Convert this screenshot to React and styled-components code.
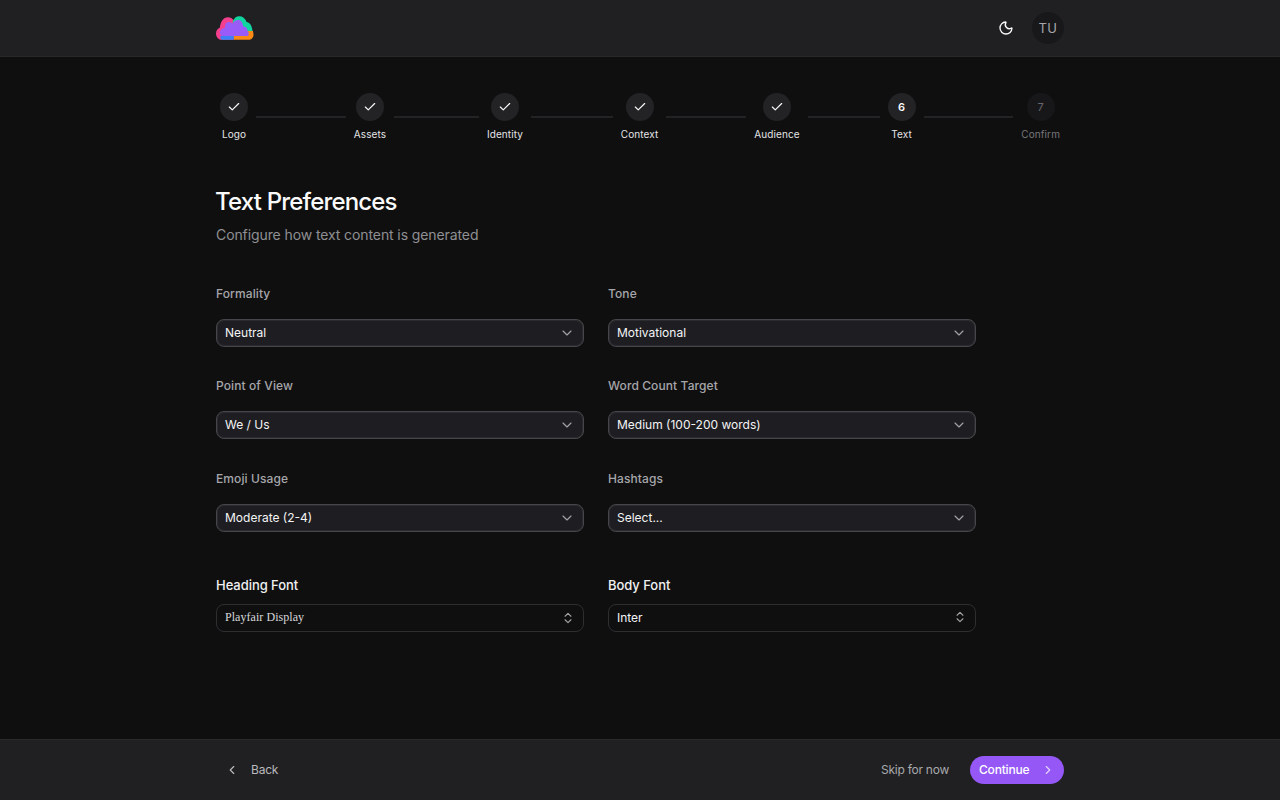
import React from "react";
import styled, { createGlobalStyle } from "styled-components";
import { Check, ChevronDown, ChevronLeft, ChevronRight, ChevronsUpDown, Moon } from "lucide-react";

const Global = createGlobalStyle`
  html, body { margin: 0; padding: 0; background: #0f0f10; }
  * { box-sizing: border-box; }
  body { font-family: Inter, "Liberation Sans", sans-serif; color: #fafafa; }
`;
const Page = styled.div`
  width: 1280px; height: 800px; display: flex; flex-direction: column; background: #0f0f10; overflow: hidden;
`;
const Bar = styled.div`
  height: 57px; flex: none; background: #202023; border-bottom: 1px solid #29292c; display: flex; justify-content: center;
`;
const BarInner = styled.div`
  width: 848px; display: flex; align-items: center; justify-content: space-between;
`;
const Logo = styled.svg`
  width: 37.5px; height: 24px; display: block;
`;
const HeaderRight = styled.div`
  display: flex; align-items: center; gap: 10px;
`;
const ThemeButton = styled.div`
  width: 32px; height: 32px; display: flex; align-items: center; justify-content: center; color: #fafafa;
`;
const Avatar = styled.div`
  width: 32px; height: 32px; border-radius: 50%; background: #18181a; color: #a6a6a9;
  display: flex; align-items: center; justify-content: center; font-size: 13px; letter-spacing: 0.4px;
`;
const Main = styled.main`
  flex: 1; width: 848px; margin: 0 auto; padding-top: 36px;
`;
const Stepper = styled.div`
  display: flex; align-items: flex-start; height: 48px;
`;
const Step = styled.div`
  flex: none; padding: 0 4px; display: flex; flex-direction: column; align-items: center; gap: 6px;
`;
const Circle = styled.div`
  width: 28px; height: 28px; border-radius: 50%;
  background: ${p => (p.$off ? "#171719" : "#232326")};
  color: ${p => (p.$off ? "#68686c" : "#fafafa")};
  display: flex; align-items: center; justify-content: center;
  font-size: 11px; font-weight: ${p => (p.$off ? 400 : 600)};
`;
const StepLabel = styled.span`
  font-size: 10px; line-height: 14px; font-weight: 400; letter-spacing: 0.1px; white-space: nowrap;
  color: ${p => (p.$off ? "#77777b" : "#e4e4e6")};
`;
const Connector = styled.div`
  flex: ${p => p.$w} 1 0; height: 2px; margin: 23px 4px 0; background: #232326;
`;
const Title = styled.h1`
  margin: 45px 0 0 -1px; font-size: 24px; line-height: 32px; font-weight: 500; letter-spacing: -0.82px; color: #fafafa;
`;
const Subtitle = styled.p`
  margin: 7px 0 0; font-size: 14px; line-height: 20px; letter-spacing: -0.1px; color: #8f8f93;
`;
const Grid = styled.div`
  width: 760px; margin-top: 40.9px; display: grid; grid-template-columns: 368px 368px; column-gap: 24px; row-gap: 31.5px;
`;
const Field = styled.div`
  display: flex; flex-direction: column; gap: 17px;
`;
const Label = styled.label`
  font-size: 12px; line-height: 16px; font-weight: 500; letter-spacing: 0.1px; color: #a6a6aa;
`;
const Select = styled.div`
  height: 28px; padding: 0 8px 1px; border: 1px solid #46464a; border-radius: 8px; background: #1e1e22;
  box-shadow: inset 0 0 0 1px #2b2b2f;
  display: flex; align-items: center; justify-content: space-between; font-size: 12px; color: #f4f4f5;
  svg { color: #a1a1a5; margin-top: 1px; }
`;
const FontGrid = styled.div`
  width: 760px; margin-top: 45px; display: grid; grid-template-columns: 368px 368px; column-gap: 24px;
`;
const FontField = styled.div`
  display: flex; flex-direction: column; gap: 11px;
`;
const FontLabel = styled.label`
  font-size: 13px; line-height: 16px; font-weight: 500; letter-spacing: -0.05px; color: #f0f0f1;
`;
const FontSelect = styled.div`
  height: 28px; padding: ${p => (p.$serif ? "0 8px" : "0 8px 1px")}; border: 1px solid #2e2e31; border-radius: 8px; background: #0f0f10;
  display: flex; align-items: center; justify-content: space-between; font-size: 12px;
  color: ${p => (p.$serif ? "#d8d8da" : "#f4f4f5")};
  font-family: ${p => (p.$serif ? '"Liberation Serif", serif' : "inherit")};
  letter-spacing: ${p => (p.$serif ? "0.05px" : "0")};
  svg { color: #a1a1a5; }
`;
const Footer = styled.footer`
  height: 61px; flex: none; background: #202023; border-top: 1px solid #2a2a2d; display: flex; justify-content: center;
`;
const FooterInner = styled.div`
  width: 848px; display: flex; align-items: center; justify-content: space-between;
`;
const BackButton = styled.div`
  display: flex; align-items: center; gap: 12px; padding-left: 9px; font-size: 12px; line-height: 16px; letter-spacing: -0.2px; color: #b9b9bc;
`;
const FooterRight = styled.div`
  display: flex; align-items: center; gap: 21px;
`;
const Skip = styled.span`
  font-size: 12px; line-height: 16px; letter-spacing: -0.25px; color: #a9a9ac;
`;
const Continue = styled.div`
  width: 94px; height: 28px; border-radius: 14px; background: #9558f7; color: #fff; font-size: 12px; line-height: 16px; font-weight: 500;
  display: flex; align-items: center; justify-content: space-between; padding: 0 9px;
  letter-spacing: -0.2px;
  svg { color: #e3d2fd; }
`;

const steps = [
  { l: "Logo", w: 90 }, { l: "Assets", w: 85 }, { l: "Identity", w: 82 }, { l: "Context", w: 80 },
  { l: "Audience", w: 72 }, { l: "Text", n: 6, w: 90 }, { l: "Confirm", n: 7, off: true },
];
const fields = [
  ["Formality", "Neutral"], ["Tone", "Motivational"],
  ["Point of View", "We / Us"], ["Word Count Target", "Medium (100-200 words)"],
  ["Emoji Usage", "Moderate (2-4)"], ["Hashtags", "Select..."],
];

export default function App() {
  return (
    <Page>
      <Global />
      <Bar>
        <BarInner>
          <Logo viewBox="0 0 38 24">
            <path d="M18 24H6C2.500 24 0 21 0 17.500 0 14.500 1.800 12.500 4 11.500 4.500 5.500 7.500 1 12 1 14.500 1 16.500 2 18 4.500Z" fill="#f43f8e" />
            <path d="M17 5C18.500 2 20.500 0 23.500 0 27 0 29.500 2 31 6 34 6.500 36.500 9.500 37 15H17Z" fill="#10d5a0" />
            <path d="M18 15H37.500C37.800 17 38 18 38 19 38 22 35.500 24 33 24H18Z" fill="#fb8a14" />
            <path d="M4.500 20H18V24H6C5 24 4.500 22 4.500 20Z" fill="#3b82f6" />
            <path d="M7 20C5 20 4 18.500 4 16.500 4 14 6 12.500 9 12 9 8 10.500 6 13 6 15 6 16.500 7 17 8 17.500 5.500 20 4 22.500 4 25.500 4 27 6.500 27.500 10.500 30 10.500 32 12 32 15 33.500 16 33.500 20 32 20Z" fill="#9a5cf8" />
          </Logo>
          <HeaderRight>
            <ThemeButton><Moon size={16} strokeWidth={2} /></ThemeButton>
            <Avatar>TU</Avatar>
          </HeaderRight>
        </BarInner>
      </Bar>
      <Main>
        <Stepper>
          {steps.map(s => (
            <React.Fragment key={s.l}>
              <Step>
                <Circle $off={s.off}>{s.n || <Check size={14} strokeWidth={2} />}</Circle>
                <StepLabel $off={s.off}>{s.l}</StepLabel>
              </Step>
              {s.w && <Connector $w={s.w} />}
            </React.Fragment>
          ))}
        </Stepper>
        <Title>Text Preferences</Title>
        <Subtitle>Configure how text content is generated</Subtitle>
        <Grid>
          {fields.map(([l, v]) => (
            <Field key={l}>
              <Label>{l}</Label>
              <Select>{v}<ChevronDown size={16} strokeWidth={1.75} /></Select>
            </Field>
          ))}
        </Grid>
        <FontGrid>
          <FontField>
            <FontLabel>Heading Font</FontLabel>
            <FontSelect $serif>Playfair Display<ChevronsUpDown size={14} strokeWidth={2} /></FontSelect>
          </FontField>
          <FontField>
            <FontLabel>Body Font</FontLabel>
            <FontSelect>Inter<ChevronsUpDown size={14} strokeWidth={2} /></FontSelect>
          </FontField>
        </FontGrid>
      </Main>
      <Footer>
        <FooterInner>
          <BackButton><ChevronLeft size={14} />Back</BackButton>
          <FooterRight>
            <Skip>Skip for now</Skip>
            <Continue>Continue<ChevronRight size={14} /></Continue>
          </FooterRight>
        </FooterInner>
      </Footer>
    </Page>
  );
}
